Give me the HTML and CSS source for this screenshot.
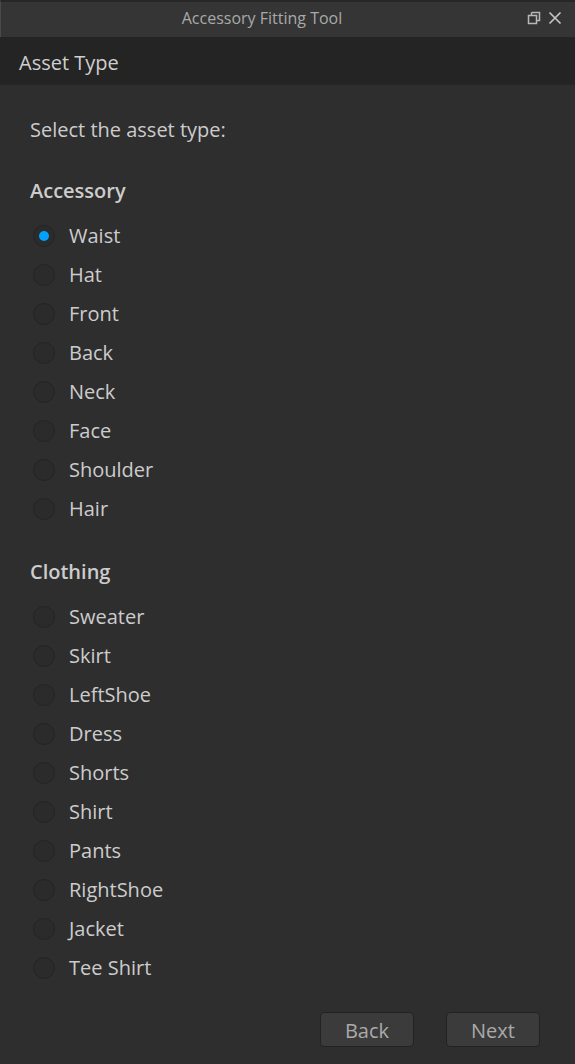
FILE: index.html
```html
<!DOCTYPE html>
<html>
<head>
<meta charset="utf-8">
<link rel="stylesheet" href="styles.css">
</head>
<body>
<div class="window">
  <div class="titlebar">
    <div class="title">Accessory Fitting Tool</div>
    <div class="tb-icons">
      <svg class="ico" width="14" height="14" viewBox="0 0 14 14"><path d="M4.5 1.5h8v8h-3M1.5 4.5h8v8h-8z M4.5 1.5v3" fill="none" stroke="#b8b8b8" stroke-width="1.5"/></svg>
      <svg class="ico" width="14" height="14" viewBox="0 0 14 14"><path d="M1.5 1.5l11 11M12.5 1.5l-11 11" stroke="#c4c4c4" stroke-width="1.7"/></svg>
    </div>
  </div>
  <div class="header">Asset Type</div>
  <div class="content">
    <div class="prompt">Select the asset type:</div>
    <div class="group-title">Accessory</div>
    <div class="list">
      <div class="row"><span class="radio on"></span><span class="label">Waist</span></div>
      <div class="row"><span class="radio"></span><span class="label">Hat</span></div>
      <div class="row"><span class="radio"></span><span class="label">Front</span></div>
      <div class="row"><span class="radio"></span><span class="label">Back</span></div>
      <div class="row"><span class="radio"></span><span class="label">Neck</span></div>
      <div class="row"><span class="radio"></span><span class="label">Face</span></div>
      <div class="row"><span class="radio"></span><span class="label">Shoulder</span></div>
      <div class="row"><span class="radio"></span><span class="label">Hair</span></div>
    </div>
    <div class="group-title second">Clothing</div>
    <div class="list">
      <div class="row"><span class="radio"></span><span class="label">Sweater</span></div>
      <div class="row"><span class="radio"></span><span class="label">Skirt</span></div>
      <div class="row"><span class="radio"></span><span class="label">LeftShoe</span></div>
      <div class="row"><span class="radio"></span><span class="label">Dress</span></div>
      <div class="row"><span class="radio"></span><span class="label">Shorts</span></div>
      <div class="row"><span class="radio"></span><span class="label">Shirt</span></div>
      <div class="row"><span class="radio"></span><span class="label">Pants</span></div>
      <div class="row"><span class="radio"></span><span class="label">RightShoe</span></div>
      <div class="row"><span class="radio"></span><span class="label">Jacket</span></div>
      <div class="row"><span class="radio"></span><span class="label">Tee Shirt</span></div>
    </div>
    <div class="buttons">
      <div class="btn">Back</div>
      <div class="btn">Next</div>
    </div>
  </div>
</div>
</body>
</html>
```
FILE: styles.css
```css
html, body {
  margin: 0;
  padding: 0;
  background: #2e2e2e;
}
body {
  font-family: "Open Sans", "Liberation Sans", sans-serif;
  color: #cccccc;
}
.window {
  width: 575px;
  height: 1064px;
  background: #2e2e2e;
  overflow: hidden;
  display: flex;
  flex-direction: column;
}
.titlebar {
  height: 35px;
  border-top: 2px solid #272727;
  border-left: 1px solid #4a4a4a;
  background: #353535;
  display: flex;
  align-items: center;
  position: relative;
}
.title {
  flex: 1;
  text-align: center;
  padding-right: 52px;
  padding-bottom: 4px;
  font-size: 16px;
  color: #a9a9a9;
}
.tb-icons {
  position: absolute;
  right: 13px;
  top: 9px;
  display: flex;
  gap: 7px;
}
.ico { display: block; }
.header {
  height: 43px;
  padding-top: 4px;
  background: #242424;
  border-bottom: 1px solid #262626;
  display: flex;
  align-items: center;
  padding-left: 19px;
  font-size: 20px;
  color: #cfcfcf;
}
.content {
  padding: 30px 35px 0 30px;
}
.prompt {
  height: 30px;
  line-height: 30px;
  font-size: 20px;
}
.group-title {
  margin-top: 30px;
  height: 30px;
  line-height: 30px;
  font-size: 20px;
  font-weight: 600;
  margin-bottom: 11px;
  padding-top: 1px;
  box-sizing: border-box;
}
.group-title.second { margin-top: 28px; }
.list { display: flex; flex-direction: column; }
.row {
  height: 39px;
  display: flex;
  align-items: center;
}
.radio {
  width: 20px;
  height: 20px;
  margin-left: 3px;
  border-radius: 50%;
  border: 1px solid #242424;
  background: #2b2b2b;
  display: flex;
  align-items: center;
  justify-content: center;
  flex: none;
}
.radio.on::after {
  content: "";
  width: 10px;
  height: 10px;
  border-radius: 50%;
  background: #00a2ff;
}
.label {
  margin-left: 14px;
  font-size: 20px;
}
.buttons {
  margin-top: 25px;
  display: flex;
  justify-content: flex-end;
  gap: 32px;
}
.btn {
  width: 92px;
  height: 32px;
  padding-top: 1px;
  box-sizing: content-box;
  border: 1px solid #222222;
  border-radius: 4px;
  background: #3b3b3b;
  display: flex;
  align-items: center;
  justify-content: center;
  font-size: 20px;
  color: #aaaaaa;
}
```
